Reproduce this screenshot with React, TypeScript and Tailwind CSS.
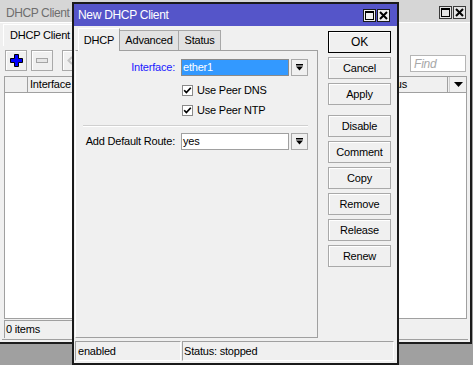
import React from "react";

function DropIcon() {
  return (
    <svg width="7" height="7" viewBox="0 0 7 7">
      <rect x="0" y="0" width="7" height="1.5" fill="#000" />
      <path d="M0 2.5 H7 L3.5 6.5 Z" fill="#000" />
    </svg>
  );
}

function Check() {
  return (
    <div className="w-[11px] h-[11px] border border-[#8a8a8a] bg-white flex items-center justify-center">
      <svg width="9" height="9" viewBox="0 0 9 9">
        <path d="M1.2 4.2 L3.4 6.6 L7.8 1.8" fill="none" stroke="#000" strokeWidth="1.7" />
      </svg>
    </div>
  );
}

function WinBtn({ kind, dark }: { kind: "max" | "close"; dark?: boolean }) {
  return (
    <div
      className={
        dark
          ? "w-[13px] h-[13px] border border-[#1a1a1a] bg-[#f0f0f0] flex items-center justify-center"
          : "w-[13px] h-[13px] border border-[#3a3a3a] bg-[#e4e4e4] flex items-center justify-center"
      }
    >
      {kind === "max" ? (
        <svg width="9" height="9" viewBox="0 0 9 9">
          <rect x="0.5" y="0.5" width="8" height="8" fill="none" stroke="#000" strokeWidth="1" />
          <rect x="0.5" y="0.5" width="8" height="1.5" fill="#000" />
        </svg>
      ) : (
        <svg width="9" height="9" viewBox="0 0 9 9">
          <path d="M1 1 L8 8 M8 1 L1 8" stroke="#000" strokeWidth="2" />
        </svg>
      )}
    </div>
  );
}

function DlgButton({ label, def, extra }: { label: string; def?: boolean; extra?: string }) {
  return (
    <div
      className={
        (def
          ? "h-[22px] border border-black bg-[#f0f0f0] shadow-[inset_1px_1px_0_#ffffff] flex items-center justify-center text-[12px]"
          : "h-[22px] border border-[#a9a9a9] bg-[#f0f0f0] shadow-[inset_1px_1px_0_#ffffff] flex items-center justify-center text-[11px]") +
        (extra ? " " + extra : "")
      }
    >
      {label}
    </div>
  );
}

function BackgroundWindow() {
  return (
    <div className="w-[472px] h-[344px] bg-[#f0f0f0] border-r-2 border-b-2 border-[#1c1c1c] flex flex-col">
      {/* title bar */}
      <div className="h-[23px] shrink-0 bg-[#d6d6d6] border-b border-white flex items-center justify-between pl-[6px] pr-[4px] pt-[4px]">
        <span className="text-[12px] text-[#6e6e6e] tracking-[-0.4px] whitespace-nowrap">DHCP Client</span>
        <div className="flex gap-[1px] -mt-[1px]">
          <WinBtn kind="max" />
          <WinBtn kind="close" />
        </div>
      </div>
      {/* tab row */}
      <div className="h-[23px] shrink-0 flex items-end pl-[3px]">
        <div className="h-[22px] w-[90px] border-t border-l border-white flex items-center pl-[6px] whitespace-nowrap">
          DHCP Client
        </div>
      </div>
      {/* toolbar */}
      <div className="h-[22px] mt-[4px] shrink-0 flex items-start pr-[4px]">
        <div className="ml-[5px] w-[22px] h-[21px] border border-[#a9a9a9] bg-[#f0f0f0] shadow-[inset_1px_1px_0_#ffffff] flex items-center justify-center">
          <svg width="13" height="13" viewBox="0 0 13 13">
            <path d="M4.5 0.5 H8.5 V4.5 H12.5 V8.5 H8.5 V12.5 H4.5 V8.5 H0.5 V4.5 H4.5 Z" fill="#0000ff" stroke="#000" strokeWidth="1" />
          </svg>
        </div>
        <div className="ml-[4px] w-[22px] h-[21px] border border-[#a9a9a9] bg-[#f0f0f0] shadow-[inset_1px_1px_0_#ffffff] flex items-center justify-center">
          <svg width="12" height="5" viewBox="0 0 12 5">
            <rect x="0.5" y="0.5" width="11" height="4" fill="#e6e6e6" stroke="#a5a5a5" />
          </svg>
        </div>
        <div className="ml-[9px] w-[22px] h-[21px] border border-[#a9a9a9] bg-[#f0f0f0] shadow-[inset_1px_1px_0_#ffffff] flex items-center pl-[4px]">
          <svg width="8" height="9" viewBox="0 0 8 9">
            <path d="M5 1 L1.5 4.5 L5 8" fill="none" stroke="#c4c4c4" strokeWidth="2" />
          </svg>
        </div>
        <div className="ml-auto mt-[5px] w-[56px] h-[17px] border border-[#b5b5b5] bg-white flex items-center pl-[3px]">
          <span className="italic text-[#a8a8a8] text-[12px]">Find</span>
        </div>
      </div>
      {/* table */}
      <div className="mt-[4px] ml-[4px] w-[463px] h-[243px] shrink-0 border border-[#a0a0a0] flex flex-col">
        <div className="h-[16px] shrink-0 border-b border-[#a0a0a0] bg-[#f0f0f0] flex">
          <div className="w-[23px] border-r border-[#a0a0a0]" />
          <div className="w-[100px] border-r border-[#a0a0a0] flex items-center pl-[2px]">Interface</div>
          <div className="flex-1" />
          <div className="w-[75px] border-r border-[#a0a0a0] flex items-center pl-[4px]">Status</div>
          <div className="w-[17px] border-l border-[#cfcfcf] ml-[1px] flex items-center justify-center">
            <svg width="9" height="5" viewBox="0 0 9 5">
              <path d="M0 0 H9 L4.5 5 Z" fill="#000" />
            </svg>
          </div>
        </div>
        <div className="flex-1 bg-white" />
      </div>
      {/* status */}
      <div className="mt-[1px] h-[18px] shrink-0 flex">
        <div className="ml-[4px] w-[200px] h-[18px] border-t border-l border-[#a0a0a0] flex items-center pl-[1px]">
          0 items
        </div>
      </div>
      <div className="mt-[1px] ml-[2px] mr-[2px] h-[2px] border-t border-[#a0a0a0]" />
    </div>
  );
}

function Dialog() {
  return (
    <div className="absolute left-[72px] top-[2px] w-[327px] h-[363px] border-2 border-[#1a1a1a] bg-[#f0f0f0] flex flex-col">
      {/* title */}
      <div className="h-[22px] shrink-0 bg-[#5555c9] flex items-center justify-between pl-[4px] pr-[7px]">
        <span className="text-white text-[12px] tracking-[-0.3px] whitespace-nowrap">New DHCP Client</span>
        <div className="flex gap-[1px] mt-[1px]">
          <WinBtn kind="max" dark />
          <WinBtn kind="close" dark />
        </div>
      </div>
      {/* body */}
      <div className="h-[314px] shrink-0 flex">
        <div className="ml-[1px] w-[243px] flex flex-col">
          <div className="h-[24px] shrink-0 flex items-end pl-[3px]">
            <div className="relative z-10 -mb-px h-[23px] w-[42px] bg-[#f0f0f0] border-t border-l border-white border-r border-r-[#a0a0a0] flex items-center justify-center">
              DHCP
            </div>
            <div className="h-[20px] w-[59px] bg-[#e2e2e2] border-t border-r border-[#a8a8a8] flex items-center justify-center">
              Advanced
            </div>
            <div className="h-[20px] w-[42px] bg-[#e2e2e2] border-t border-r border-[#a8a8a8] flex items-center justify-center">
              Status
            </div>
          </div>
          <div className="h-[288px] shrink-0 border border-[#a0a0a0] border-l-white pl-[7px] pt-[8px] flex flex-col">
            <div className="h-[17px] flex items-center">
              <div className="w-[92px] shrink-0 flex justify-end whitespace-nowrap text-[#1a1aff]">Interface:</div>
              <div className="ml-[6px] w-[108px] h-[17px] border border-[#8a8a8a] bg-[#3399ff] text-white flex items-center pl-[1px]">
                ether1
              </div>
              <div className="ml-[2px] w-[17px] h-[17px] border border-[#a9a9a9] bg-[#f0f0f0] flex items-center justify-center">
                <DropIcon />
              </div>
            </div>
            <div className="mt-[4px] h-[20px] flex items-center pl-[99px]">
              <Check />
              <span className="ml-[4px] whitespace-nowrap">Use Peer DNS</span>
            </div>
            <div className="h-[20px] flex items-center pl-[99px]">
              <Check />
              <span className="ml-[4px] whitespace-nowrap">Use Peer NTP</span>
            </div>
            <div className="mt-[5px] w-[225px] h-px bg-[#d0d0d0]" />
            <div className="w-[225px] h-px bg-white" />
            <div className="mt-[6px] h-[17px] flex items-center">
              <div className="w-[92px] shrink-0 flex justify-end whitespace-nowrap">Add Default Route:</div>
              <div className="ml-[6px] w-[108px] h-[17px] border border-[#a0a0a0] bg-white flex items-center pl-[1px]">
                yes
              </div>
              <div className="ml-[2px] w-[17px] h-[17px] border border-[#a9a9a9] bg-[#f0f0f0] flex items-center justify-center">
                <DropIcon />
              </div>
            </div>
          </div>
        </div>
        <div className="ml-[10px] w-[63px] pt-[5px] flex flex-col gap-[4px]">
          <DlgButton label="OK" def />
          <DlgButton label="Cancel" />
          <DlgButton label="Apply" />
          <DlgButton label="Disable" extra="mt-[6px]" />
          <DlgButton label="Comment" />
          <DlgButton label="Copy" />
          <DlgButton label="Remove" />
          <DlgButton label="Release" />
          <DlgButton label="Renew" />
        </div>
      </div>
      {/* status bar */}
      <div className="h-[23px] shrink-0 flex pt-[1px] pl-[1px] gap-[1px]">
        <div className="w-[106px] h-[20px] border-t border-l border-[#a0a0a0] border-b border-r border-b-white border-r-white flex items-center pl-[2px]">
          enabled
        </div>
        <div className="w-[212px] h-[20px] border-t border-l border-[#a0a0a0] border-b border-r border-b-white border-r-white flex items-center pl-[1px]">
          Status: stopped
        </div>
      </div>
    </div>
  );
}

export default function App() {
  return (
    <div className="relative w-[473px] h-[365px] overflow-hidden bg-[#a0a0a0] font-['Liberation_Sans',Arial,sans-serif] text-[11px] leading-none tracking-[-0.2px] text-black">
      <BackgroundWindow />
      <Dialog />
    </div>
  );
}
